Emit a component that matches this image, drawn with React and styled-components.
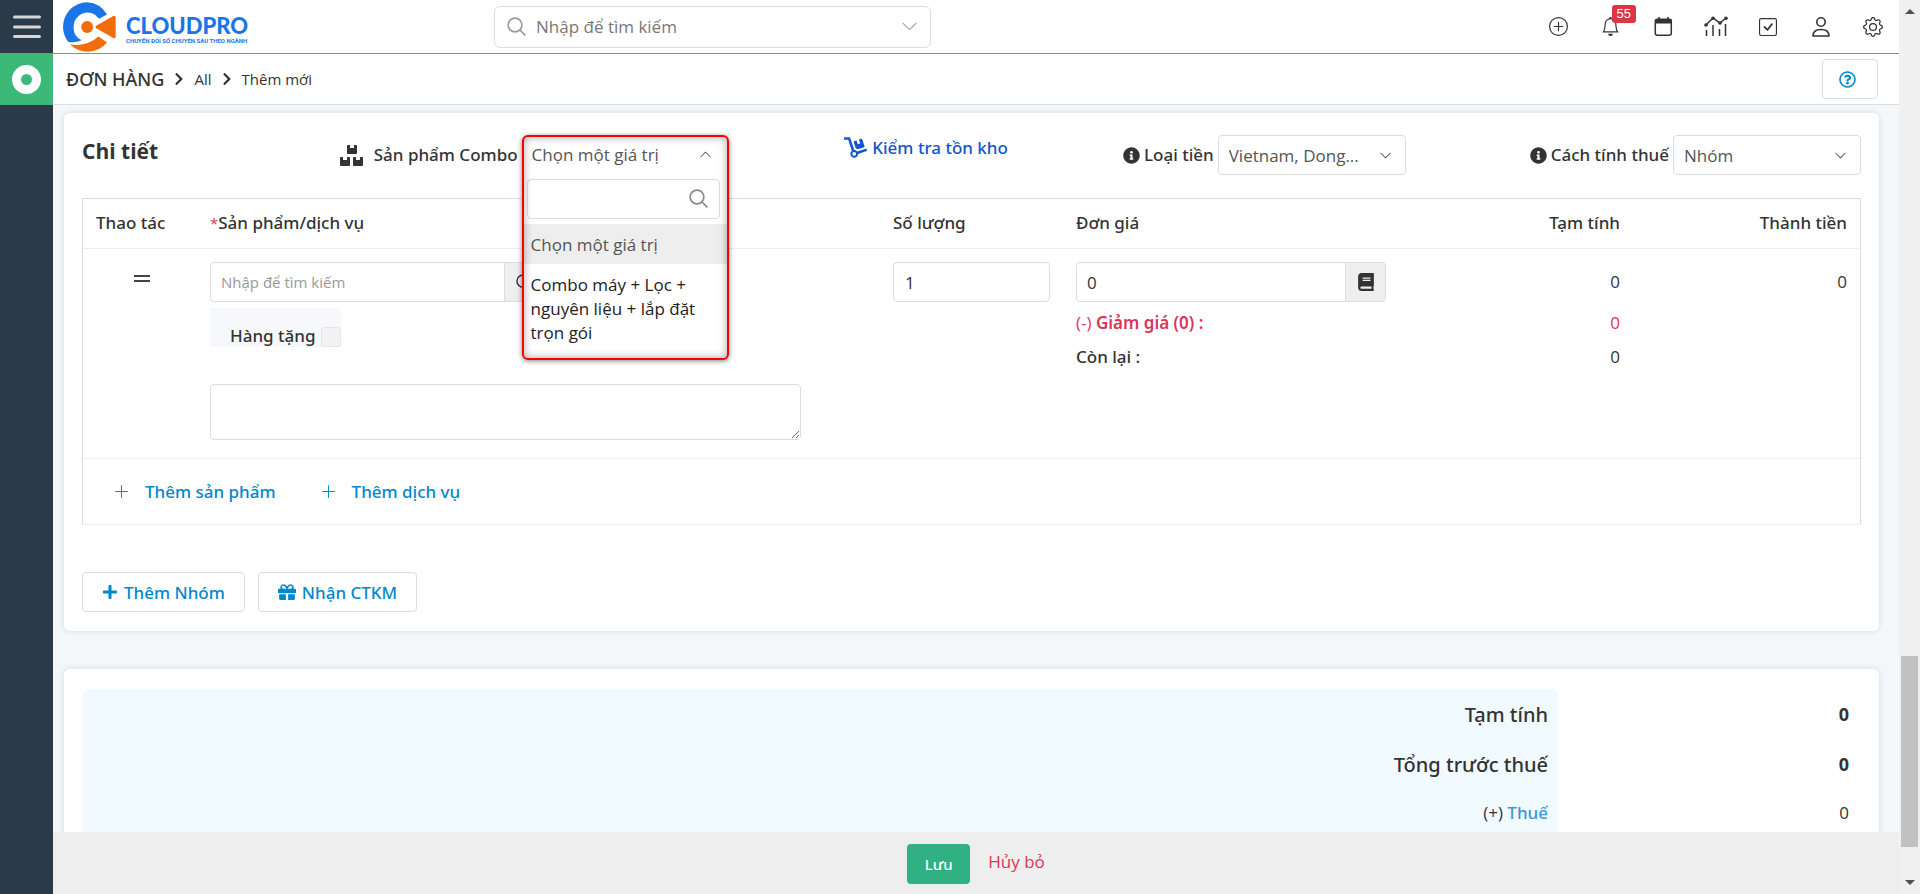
import React from "react";
import styled, { createGlobalStyle, css } from "styled-components";
import {
  FaBook,
  FaChevronRight,
  FaDolly,
  FaGift,
  FaInfoCircle,
  FaPlus,
  FaRegQuestionCircle,
} from "react-icons/fa";
import {
  BsBell,
  BsCheckSquare,
  BsChevronDown,
  BsChevronUp,
  BsGear,
  BsPlusCircle,
  BsPlusLg,
} from "react-icons/bs";

const ink = "#333333";
const blue = "#0088cc";
const line = "#dddddd";
const red = "#dc3558";

const medium = css`
  font-family: "Noto Sans", sans-serif;
  font-weight: 500;
`;

const Global = createGlobalStyle`
  *, *::before, *::after { box-sizing: border-box; }
  body { margin: 0; overflow: hidden; }
  body, button, input, select, textarea {
    font-family: "Open Sans", "Noto Sans", sans-serif;
    font-size: 17px;
    color: ${ink};
  }
  button { padding: 0; border: 0; background: none; cursor: pointer; }
  a { text-decoration: none; }
  svg { flex: none; display: block; }
`;

const Shell = styled.div`
  display: flex;
  height: 100vh;
`;

const Sidebar = styled.nav`
  flex: none;
  width: 53px;
  background: #2b3a49;
`;

const SideButton = styled.button`
  display: flex;
  align-items: center;
  justify-content: center;
  width: 100%;
  height: ${(p) => (p.$active ? 52 : 53)}px;
  background: ${(p) => (p.$active ? "#3cb878" : "transparent")};
`;

const Column = styled.div`
  flex: 1;
  min-width: 0;
  display: flex;
  flex-direction: column;
  background: #f3f7fa;
`;

const Header = styled.header`
  flex: none;
  display: grid;
  grid-template-columns: 441px 437px 1fr;
  align-items: center;
  height: 54px;
  background: #fff;
  border-bottom: 1px solid #3cb878;
`;

const Brand = styled.a`
  display: flex;
  align-items: center;
  gap: 10px;
  padding-left: 10px;
`;

const BrandText = styled.span`
  display: flex;
  flex-direction: column;
  padding-top: 6px;
  color: #1c75e8;
  white-space: nowrap;
`;

const BrandName = styled.span`
  font-family: Lato, sans-serif;
  font-size: 22px;
  font-weight: 900;
  line-height: 22px;
`;

const BrandTag = styled.span`
  font-family: Roboto, sans-serif;
  font-size: 6px;
  font-weight: 700;
  line-height: 8px;
`;

const SearchBox = styled.label`
  display: flex;
  align-items: center;
  gap: 10px;
  height: 42px;
  padding: 0 12px;
  border: 1px solid ${line};
  border-radius: 6px;
  color: #999;
`;

const PlainInput = styled.input`
  flex: 1;
  min-width: 0;
  height: 100%;
  padding: 0;
  border: 0;
  outline: 0;
  background: none;
  &::placeholder { color: #777; opacity: 1; }
`;

const HeaderTools = styled.div`
  display: flex;
  justify-content: space-between;
  justify-self: end;
  width: 347px;
  margin-right: 10px;
`;

const Tool = styled.button`
  position: relative;
  display: flex;
  align-items: center;
  justify-content: center;
  width: 32px;
  height: 32px;
  font-size: 19px;
`;

const Badge = styled.span`
  position: absolute;
  top: -6px;
  left: 17px;
  height: 18px;
  padding: 0 5px;
  border-radius: 3px;
  background: #dc3545;
  color: #fff;
  font: 13px/18px "Liberation Sans", sans-serif;
`;

const CrumbBar = styled.div`
  flex: none;
  display: flex;
  align-items: center;
  justify-content: space-between;
  height: 51px;
  padding: 0 21px 0 13px;
  background: #fff;
  border-bottom: 1px solid ${line};
`;

const Crumbs = styled.nav`
  display: flex;
  align-items: center;
  gap: 8px;
  a { color: ${ink}; font-size: 15px; }
  a:first-child { ${medium} font-size: 18px; }
  svg { font-size: 14px; }
`;

const boxed = css`
  height: 40px;
  border: 1px solid ${line};
  border-radius: 4px;
  background: #fff;
`;

const OutlineButton = styled.button`
  ${boxed}
  ${medium}
  display: flex;
  align-items: center;
  gap: 6px;
  padding: 0 19px;
  color: ${blue};
`;

const HelpButton = styled(OutlineButton)`
  width: 56px;
  padding: 0 16px;
`;

const Scroller = styled.main`
  flex: 1;
  min-height: 0;
  overflow: hidden;
  display: flex;
  flex-direction: column;
  gap: 38px;
  padding: 8px 20px 0 11px;
`;

const Card = styled.section`
  flex: none;
  padding: 22px 18px 19px;
  border-radius: 6px;
  background: #fff;
  box-shadow: 0 0 6px rgba(0, 0, 0, 0.12);
`;

const DetailBar = styled.div`
  display: grid;
  grid-template-columns: 258fr 505fr 279fr 407fr 330fr;
  height: 63px;
`;

const Title = styled.h2`
  margin: 0;
  font-size: 21px;
  line-height: 32px;
  font-weight: 700;
`;

const Field = styled.div`
  display: flex;
  align-items: center;
  gap: 4px;
  height: 40px;
  white-space: nowrap;
  label { ${medium} padding-bottom: 2px; }
`;

const ComboLabel = styled.label`
  padding-left: 6px;
`;

const StockLink = styled.a`
  ${medium}
  display: flex;
  align-items: center;
  gap: 5px;
  height: 24px;
  color: #1155cc;
`;

const SelectWrap = styled.div`
  ${boxed}
  display: grid;
  align-items: center;
  width: 188px;
  select, svg { grid-area: 1 / 1; }
  svg { justify-self: end; margin-right: 13px; pointer-events: none; color: #444; }
`;

const NativeSelect = styled.select`
  appearance: none;
  width: 100%;
  height: 100%;
  padding: 0 36px 0 10px;
  border: 0;
  outline: 0;
  background: none;
  color: #555;
  text-overflow: ellipsis;
`;

const ComboAnchor = styled.div`
  position: relative;
  width: 207px;
  height: 40px;
`;

const ComboFrame = styled.div`
  position: absolute;
  z-index: 2;
  inset: 0 0 auto 0;
  padding-bottom: 6px;
  border: 2px solid #ff0000;
  border-radius: 6px;
  background: #fff;
  box-shadow: 0 1px 5px rgba(0, 0, 0, 0.5);
  white-space: normal;
  &::after {
    content: "";
    position: absolute;
    inset: 0;
    border-radius: 4px;
    box-shadow: inset 0 0 8px rgba(0, 0, 0, 0.35);
    pointer-events: none;
  }
`;

const ComboTrigger = styled.button`
  display: flex;
  align-items: center;
  justify-content: space-between;
  width: 100%;
  height: 38px;
  padding: 0 15px 4px 8px;
  color: #555;
`;

const ComboSearch = styled.label`
  ${boxed}
  display: flex;
  align-items: center;
  margin: 4px 7px 5px 3px;
  padding: 0 11px;
  color: #888;
`;

const Options = styled.ul`
  margin: 0;
  padding: 0;
  list-style: none;
`;

const Option = styled.li`
  padding: 9px 16px 7px 7px;
  line-height: 24px;
  color: ${(p) => (p.$current ? "#555" : "#222")};
  background: ${(p) => (p.$current ? "#eeeeee" : "transparent")};
`;

const ItemTable = styled.table`
  width: 100%;
  table-layout: fixed;
  border-spacing: 0;
  border: 1px solid ${line};
  border-bottom-color: #eee;
`;

const Col = styled.col`
  width: ${(p) => (p.$w ? `${p.$w}px` : "auto")};
`;

const Th = styled.th`
  ${medium}
  height: 50px;
  padding: 0 13px 2px;
  border-bottom: 1px solid #eee;
  text-align: ${(p) => p.$align || "left"};
`;

const Td = styled.td`
  height: 210px;
  padding: 13px 13px 0;
  border-bottom: 1px solid #eee;
  vertical-align: top;
  text-align: ${(p) => p.$align || "left"};
`;

const AddCell = styled.td`
  height: 65px;
  padding: 0 30px;
`;

const Required = styled.span`
  color: ${red};
  font-family: "Open Sans", sans-serif;
  font-size: 15px;
  font-weight: 400;
`;

const Handle = styled.button`
  display: flex;
  align-items: center;
  justify-content: center;
  width: 100%;
  height: 34px;
  padding-left: 4px;
  cursor: grab;
`;

const Group = styled.div`
  ${boxed}
  display: flex;
  width: ${(p) => p.$w}px;
  overflow: hidden;
  input { padding: 0 10px; }
`;

const ProductGroup = styled(Group)`
  input { font-size: 15px; }
  input::placeholder { color: #999; }
`;

const Addon = styled.button`
  display: flex;
  align-items: center;
  justify-content: center;
  width: 40px;
  border-left: 1px solid ${line};
  background: #eee;
  font-size: 18px;
`;

const QtyInput = styled.input`
  ${boxed}
  display: block;
  width: 157px;
  padding: 0 11px;
`;

const GiftLabel = styled.label`
  ${medium}
  display: flex;
  align-items: flex-end;
  gap: 5px;
  width: max-content;
  height: 39px;
  margin-top: 6px;
  padding-left: 20px;
  background: #f7f8fb;
`;

const Tick = styled.input`
  appearance: none;
  width: 20px;
  height: 20px;
  margin: 0;
  border: 1px solid #e4e4e4;
  border-radius: 3px;
  background: #f2f2f2;
`;

const Note = styled.textarea`
  display: block;
  width: 591px;
  height: 56px;
  margin-top: 37px;
  border: 1px solid ${line};
  border-radius: 4px;
  outline: 0;
`;

const First = styled.div`
  height: 40px;
  margin-bottom: 4px;
  line-height: 40px;
`;

const PriceHead = styled.div`
  margin-bottom: 4px;
`;

const Sub = styled.div`
  height: 34px;
  line-height: 34px;
  color: ${(p) => (p.$red ? red : ink)};
  ${(p) => p.$medium && medium}
  a { color: inherit; font-family: "Noto Sans", sans-serif; font-weight: 600; }
`;

const AddList = styled.div`
  display: flex;
  gap: 44px;
`;

const AddButton = styled.button`
  ${medium}
  display: flex;
  align-items: center;
  gap: 15px;
  color: ${blue};
`;

const Actions = styled.div`
  display: flex;
  gap: 13px;
  margin-top: 47px;
`;

const SummaryTable = styled.table`
  width: 100%;
  border-spacing: 0;
  text-align: right;
`;

const SumLabel = styled.th`
  height: ${(p) => (p.$strong ? 50 : 46)}px;
  padding: 0 10px;
  background: #f1fafe;
  font-weight: 400;
  ${(p) => p.$strong && medium}
  font-size: ${(p) => (p.$strong ? 20 : 17)}px;
  tr:first-child & { border-top-right-radius: 6px; border-top-left-radius: 6px; }
  a { ${medium} color: #3598dc; }
`;

const SumValue = styled.td`
  width: 303px;
  padding: 0 12px;
  font-weight: ${(p) => (p.$strong ? 700 : 400)};
  font-size: ${(p) => (p.$strong ? 18 : 17)}px;
`;

const SummaryCard = styled(Card)`
  padding: 20px 18px 20px 19px;
`;

const Footer = styled.footer`
  flex: none;
  display: flex;
  justify-content: center;
  gap: 18px;
  height: 62px;
  padding-top: 12px;
  background: #eee;
`;

const SaveButton = styled.button`
  ${medium}
  width: 63px;
  height: 40px;
  border-radius: 4px;
  background: #31b083;
  color: #fff;
  font-size: 15px;
`;

const CancelLink = styled.a`
  color: ${red};
  line-height: 36px;
`;

const Rail = styled.div`
  flex: none;
  display: flex;
  flex-direction: column;
  align-items: center;
  justify-content: space-between;
  width: 21px;
  padding: 9px 0;
  background: #f0f0f0;
`;

const RailTrack = styled.div`
  flex: 1;
  display: flex;
  flex-direction: column;
  justify-content: flex-end;
  padding-bottom: 33px;
`;

const RailThumb = styled.div`
  width: 17px;
  height: 191px;
  background: #c1c1c1;
`;

const Search = ({ size = 19 }) => (
  <svg width={size} height={size} viewBox="0 0 19 19" fill="none" stroke="currentColor" strokeWidth="1.6">
    <circle cx="8" cy="8" r="6.9" />
    <path d="M13 13l5.4 5.4" />
  </svg>
);

const Logo = () => (
  <svg width="53" height="50" viewBox="189 3 160 150">
    <path
      fill="#1c75e8"
      d="M322 40A75 75 0 0 0 262 3A74 75 0 0 0 189 78A75 75 0 0 0 205 123Q227 127 245 118A43 43 0 0 1 221 78A42 42 0 0 1 298 53Z"
    />
    <path fill="#f26c0d" d="M210 130Q260 139 296 107L322 125A75 75 0 0 1 210 130Z" />
    <circle cx="262" cy="78" r="18" fill="#f26c0d" />
    <path fill="#f26c0d" d="M289 74L341 45Q348 42 348 50V107Q348 115 341 111L289 82Q284 78 289 74Z" />
  </svg>
);

const BoxesIcon = () => (
  <svg width="24" height="21" viewBox="0 0 24 21" fill="currentColor">
    <path d="M7 1q0-1 1-1h2v3h4V0h2q1 0 1 1v7q0 1-1 1H8q-1 0-1-1z" />
    <path d="M0 13q0-1 1-1h2v3h4v-3h2q1 0 1 1v7q0 1-1 1H1q-1 0-1-1z" />
    <path d="M13 13q0-1 1-1h2v3h4v-3h2q1 0 1 1v7q0 1-1 1h-8q-1 0-1-1z" />
  </svg>
);

const CalendarIcon = () => (
  <svg width="19" height="21" viewBox="0 0 19 21" fill="none" stroke="currentColor">
    <rect x="1.3" y="3.3" width="16" height="16" rx="2" strokeWidth="1.5" />
    <path d="M1 3.5h17v4H1z" fill="currentColor" stroke="none" />
    <path d="M5 1v3M14 1v3" strokeWidth="1.6" />
  </svg>
);

const ChartIcon = () => (
  <svg width="24" height="21" viewBox="0 0 24 21" fill="none" stroke="currentColor" strokeWidth="1.5">
    <path d="M2 9l7-7 7 5 6-5" />
    <path d="M2.5 14v6M9 9v11M15.5 13v7M21.5 8v12" />
    <g fill="currentColor" stroke="none">
      <circle cx="2" cy="9" r="1.8" />
      <circle cx="9" cy="2.2" r="1.8" />
      <circle cx="16" cy="7" r="1.8" />
      <circle cx="22" cy="2.2" r="1.8" />
    </g>
  </svg>
);

const PersonIcon = () => (
  <svg width="18" height="20" viewBox="0 0 18 20" fill="none" stroke="currentColor" strokeWidth="1.6" strokeLinejoin="round">
    <circle cx="9" cy="5" r="4.2" />
    <path d="M1 19C1 15 4 12.500 9 12.500S17 15 17 19Z" />
  </svg>
);

const MenuIcon = () => (
  <svg width="28" height="24" viewBox="0 0 28 24" stroke="#d5d8db" strokeWidth="3" strokeLinecap="round">
    <path d="M1.5 2h25M1.5 12h25M1.5 21.5h25" />
  </svg>
);

const RingIcon = () => (
  <svg width="29" height="29" viewBox="0 0 29 29" fill="none" stroke="#fff" strokeWidth="9">
    <circle cx="14.500" cy="14.500" r="10" />
  </svg>
);

const HandleIcon = () => (
  <svg width="16" height="8" viewBox="0 0 16 8" fill="#444">
    <path d="M0 0h16v2H0zM0 5h16v2H0z" />
  </svg>
);

const Arrow = ({ up }) => (
  <svg width="10" height="5" viewBox="0 0 10 5" fill="#505050">
    <path d={up ? "M5 0l5 5H0z" : "M0 0h10L5 5z"} />
  </svg>
);

function LabelledSelect({ id, label, value }) {
  return (
    <Field>
      <FaInfoCircle size={17} />
      <label htmlFor={id}>{label}</label>
      <SelectWrap>
        <NativeSelect id={id} defaultValue={value}>
          <option>{value}</option>
        </NativeSelect>
        <BsChevronDown size={13} />
      </SelectWrap>
    </Field>
  );
}

function ComboSelect() {
  return (
    <ComboAnchor>
      <ComboFrame>
        <ComboTrigger id="combo" aria-haspopup="listbox" aria-expanded="true">
          Chọn một giá trị
          <BsChevronUp size={13} />
        </ComboTrigger>
        <ComboSearch>
          <PlainInput type="text" aria-label="Sản phẩm Combo" />
          <Search />
        </ComboSearch>
        <Options role="listbox">
          <Option role="option" aria-selected="true" $current>
            Chọn một giá trị
          </Option>
          <Option role="option" aria-selected="false">
            Combo máy + Lọc + nguyên liệu + lắp đặt trọn gói
          </Option>
        </Options>
      </ComboFrame>
    </ComboAnchor>
  );
}

function TopBar() {
  return (
    <Header>
      <Brand href="#home">
        <Logo />
        <BrandText>
          <BrandName>CLOUDPRO</BrandName>
          <BrandTag>CHUYỂN ĐỔI SỐ CHUYÊN SÂU THEO NGÀNH</BrandTag>
        </BrandText>
      </Brand>
      <SearchBox>
        <Search />
        <PlainInput type="text" placeholder="Nhập để tìm kiếm" />
        <BsChevronDown size={17} />
      </SearchBox>
      <HeaderTools>
        <Tool aria-label="Thêm"><BsPlusCircle /></Tool>
        <Tool aria-label="Thông báo"><BsBell /><Badge>55</Badge></Tool>
        <Tool aria-label="Lịch"><CalendarIcon /></Tool>
        <Tool aria-label="Báo cáo"><ChartIcon /></Tool>
        <Tool aria-label="Công việc"><BsCheckSquare size={18} /></Tool>
        <Tool aria-label="Tài khoản"><PersonIcon /></Tool>
        <Tool aria-label="Cài đặt"><BsGear size={20} /></Tool>
      </HeaderTools>
    </Header>
  );
}

function ItemsTable() {
  return (
    <ItemTable>
      <colgroup>
        <Col $w={114} />
        <Col />
        <Col $w={183} />
        <Col $w={336} />
        <Col $w={234} />
        <Col $w={227} />
      </colgroup>
      <thead>
        <tr>
          <Th>Thao tác</Th>
          <Th><Required>*</Required>Sản phẩm/dịch vụ</Th>
          <Th>Số lượng</Th>
          <Th>Đơn giá</Th>
          <Th $align="right">Tạm tính</Th>
          <Th $align="right">Thành tiền</Th>
        </tr>
      </thead>
      <tbody>
        <tr>
          <Td>
            <Handle aria-label="Di chuyển"><HandleIcon /></Handle>
          </Td>
          <Td>
            <ProductGroup $w={335}>
              <PlainInput type="text" placeholder="Nhập để tìm kiếm" aria-label="Sản phẩm/dịch vụ" />
              <Addon aria-label="Tìm"><Search size={17} /></Addon>
            </ProductGroup>
            <GiftLabel>
              Hàng tặng
              <Tick type="checkbox" />
            </GiftLabel>
            <Note aria-label="Ghi chú" />
          </Td>
          <Td>
            <QtyInput type="text" defaultValue="1" aria-label="Số lượng" />
          </Td>
          <Td>
            <PriceHead>
              <Group $w={310}>
                <PlainInput type="text" defaultValue="0" aria-label="Đơn giá" />
                <Addon aria-label="Bảng giá"><FaBook /></Addon>
              </Group>
            </PriceHead>
            <Sub $red>(-) <a href="#discount">Giảm giá (0) :</a></Sub>
            <Sub $medium>Còn lại :</Sub>
          </Td>
          <Td $align="right">
            <First>0</First>
            <Sub $red>0</Sub>
            <Sub>0</Sub>
          </Td>
          <Td $align="right">
            <First>0</First>
          </Td>
        </tr>
        <tr>
          <AddCell colSpan={6}>
            <AddList>
              <AddButton><BsPlusLg size={17} />Thêm sản phẩm</AddButton>
              <AddButton><BsPlusLg size={17} />Thêm dịch vụ</AddButton>
            </AddList>
          </AddCell>
        </tr>
      </tbody>
    </ItemTable>
  );
}

function Details() {
  return (
    <Card>
      <DetailBar>
        <Title>Chi tiết</Title>
        <Field>
          <BoxesIcon />
          <ComboLabel htmlFor="combo">Sản phẩm Combo</ComboLabel>
          <ComboSelect />
        </Field>
        <StockLink href="#stock">
          <FaDolly size={23} />
          Kiểm tra tồn kho
        </StockLink>
        <LabelledSelect id="currency" label="Loại tiền" value="Vietnam, Dong..." />
        <LabelledSelect id="tax" label="Cách tính thuế" value="Nhóm" />
      </DetailBar>
      <ItemsTable />
      <Actions>
        <OutlineButton><FaPlus size={16} />Thêm Nhóm</OutlineButton>
        <OutlineButton><FaGift size={18} />Nhận CTKM</OutlineButton>
      </Actions>
    </Card>
  );
}

function Summary() {
  return (
    <SummaryCard>
      <SummaryTable>
        <tbody>
          <tr>
            <SumLabel $strong>Tạm tính</SumLabel>
            <SumValue $strong>0</SumValue>
          </tr>
          <tr>
            <SumLabel $strong>Tổng trước thuế</SumLabel>
            <SumValue $strong>0</SumValue>
          </tr>
          <tr>
            <SumLabel>(+) <a href="#tax">Thuế</a></SumLabel>
            <SumValue>0</SumValue>
          </tr>
        </tbody>
      </SummaryTable>
    </SummaryCard>
  );
}

export default function App() {
  return (
    <Shell>
      <Global />
      <Sidebar>
        <SideButton aria-label="Menu"><MenuIcon /></SideButton>
        <SideButton aria-label="Đơn hàng" $active><RingIcon /></SideButton>
      </Sidebar>
      <Column>
        <TopBar />
        <CrumbBar>
          <Crumbs>
            <a href="#orders">ĐƠN HÀNG</a>
            <FaChevronRight />
            <a href="#all">All</a>
            <FaChevronRight />
            <a href="#new">Thêm mới</a>
          </Crumbs>
          <HelpButton aria-label="Trợ giúp"><FaRegQuestionCircle /></HelpButton>
        </CrumbBar>
        <Scroller>
          <Details />
          <Summary />
        </Scroller>
        <Footer>
          <SaveButton>Lưu</SaveButton>
          <CancelLink href="#cancel">Hủy bỏ</CancelLink>
        </Footer>
      </Column>
      <Rail aria-hidden="true">
        <Arrow up />
        <RailTrack><RailThumb /></RailTrack>
        <Arrow />
      </Rail>
    </Shell>
  );
}
